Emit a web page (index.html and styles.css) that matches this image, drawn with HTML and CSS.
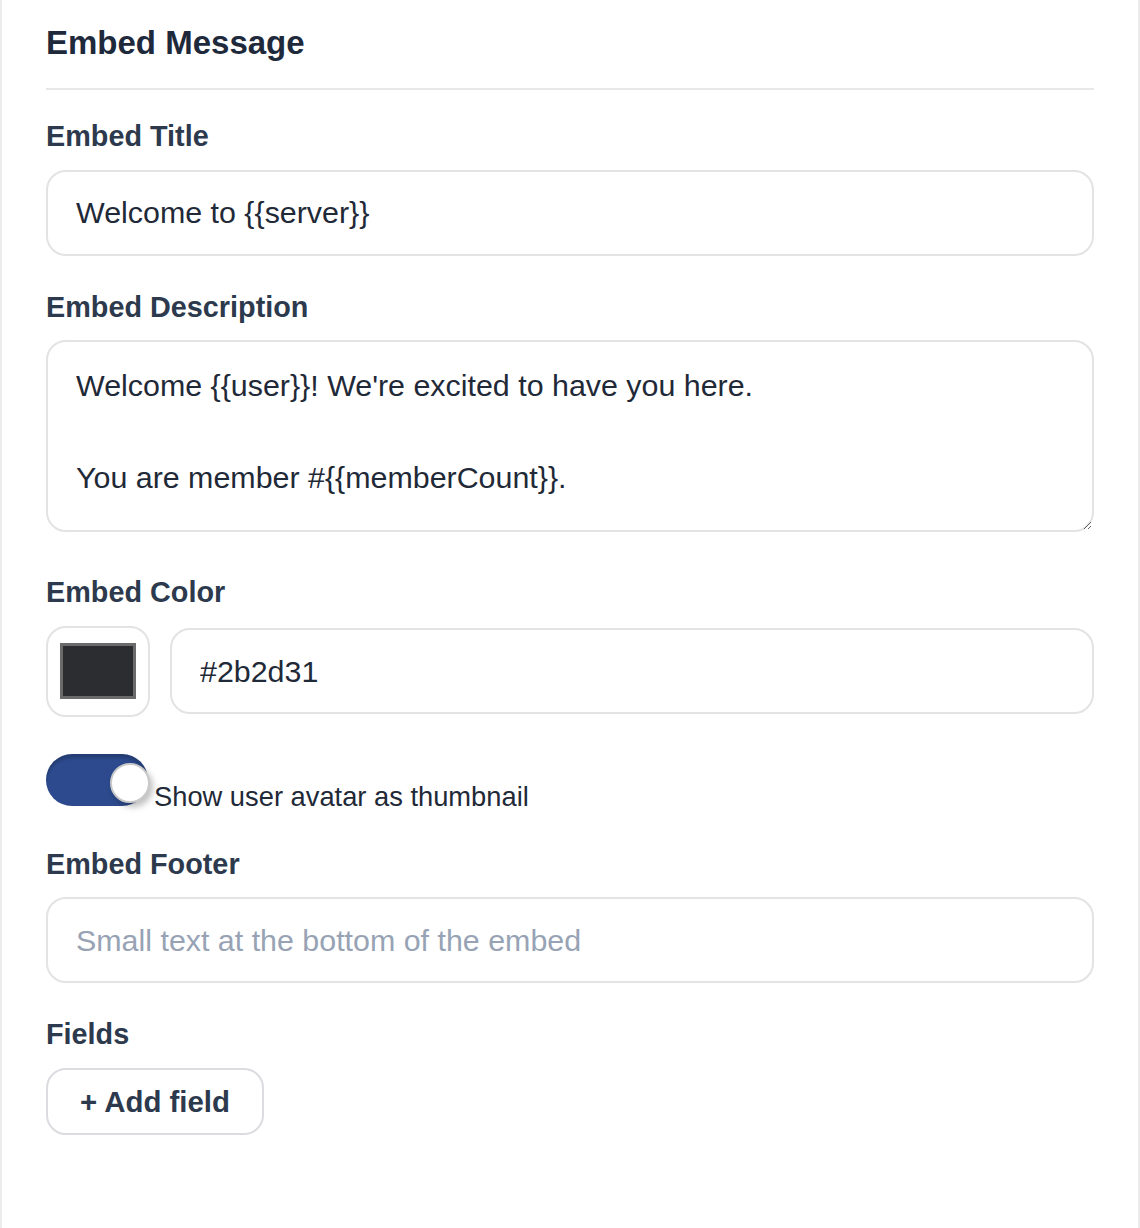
FILE: index.html
```html
<!DOCTYPE html>
<html lang="en">
<head>
    <meta charset="UTF-8">
    <meta name="viewport" content="width=device-width, initial-scale=1.0">
    <title>Embed Message</title>
    <link rel="stylesheet" href="styles.css">
</head>
<body>
    <section class="panel">
        <h2 class="panel-title">Embed Message</h2>

        <div class="field">
            <label class="field-label" for="embed-title">Embed Title</label>
            <input class="text-input" id="embed-title" type="text" value="Welcome to {{server}}">
        </div>

        <div class="field">
            <label class="field-label" for="embed-desc">Embed Description</label>
            <textarea class="text-input text-area" id="embed-desc">Welcome {{user}}! We're excited to have you here.

You are member #{{memberCount}}.</textarea>
        </div>

        <div class="field">
            <label class="field-label" for="embed-color">Embed Color</label>
            <div class="color-row">
                <div class="color-picker">
                    <span class="color-swatch"></span>
                </div>
                <input class="text-input" id="embed-color" type="text" value="#2b2d31">
            </div>
        </div>

        <label class="toggle-row">
            <span class="toggle"><span class="toggle-knob"></span></span>
            <span class="toggle-text">Show user avatar as thumbnail</span>
        </label>

        <div class="field">
            <label class="field-label" for="embed-footer">Embed Footer</label>
            <input class="text-input" id="embed-footer" type="text" placeholder="Small text at the bottom of the embed">
        </div>

        <div class="field">
            <span class="field-label">Fields</span>
            <button class="add-btn" type="button">+ Add field</button>
        </div>
    </section>
</body>
</html>
```

FILE: styles.css
```css
* { box-sizing: border-box; }
body { margin: 0; background: #fff; font-family: "Liberation Sans", Arial, sans-serif; color: #1f2937; }

.panel { min-height: 1228px; padding: 24px 44px 40px; border-left: 2px solid #ececec; border-right: 2px solid #ececec; }
.panel-title { margin: 0 0 29px; padding-bottom: 26px; border-bottom: 2px solid #e8e8e8; font-size: 33px; line-height: 38px; font-weight: 700; color: #1e293b; }

.field { margin-bottom: 34px; }
.field-label { display: block; margin-bottom: 16.5px; font-size: 28.8px; line-height: 34px; font-weight: 700; color: #2d3a4d; }

.text-input { display: block; width: 100%; height: 86px; padding: 20px 28px; border: 2px solid #e3e3e3; border-radius: 20px; font-family: inherit; font-size: 30.4px; line-height: 42px; color: #1f2937; background: #fff; outline: none; }
.text-input::placeholder { color: #97a3b4; }
.text-area { height: 192px; line-height: 46px; resize: vertical; margin-bottom: 43px; }

.color-row { display: flex; align-items: center; gap: 20px; }
.color-row .text-input { flex: 1; }
.color-picker { flex: none; display: flex; align-items: center; justify-content: center; width: 104px; height: 91px; border: 2px solid #e3e3e3; border-radius: 20px; }
.color-swatch { width: 76px; height: 56px; background: #2b2d31; border: 3px solid #6b6b6b; }

.toggle-row { display: flex; align-items: baseline; gap: 6px; margin: 37px 0 34px; }
.toggle { position: relative; flex: none; width: 102px; height: 52px; border-radius: 26px; background: #2c4a8d; box-shadow: inset 0 4px 3px rgba(0, 0, 0, 0.18); }
.toggle-knob { position: absolute; left: 64px; top: 9px; width: 40px; height: 40px; border-radius: 50%; background: #fff; border: 2px solid #c9c9c9; box-shadow: 3px 4px 6px rgba(0, 0, 0, 0.25); }
.toggle-text { font-size: 27.3px; color: #1f2937; }

.add-btn { padding: 14px 32px; border: 2px solid #dcdce0; border-radius: 20px; background: #fff; font-family: inherit; font-size: 29.4px; line-height: 35px; font-weight: 700; color: #2d3a4d; cursor: pointer; }
```
